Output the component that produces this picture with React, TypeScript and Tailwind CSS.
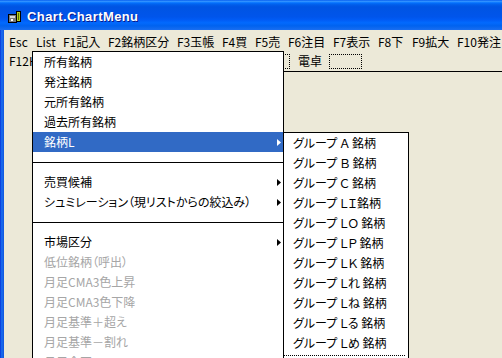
import React from "react";

const barItems = [
  { label: "Esc", w: "w-[27px]" },
  { label: "List", w: "w-[27px]" },
  { label: "F1記入", w: "w-[45px]" },
  { label: "F2銘柄区分", w: "w-[69px]" },
  { label: "F3玉帳", w: "w-[45px]" },
  { label: "F4買", w: "w-[33px]" },
  { label: "F5売", w: "w-[33px]" },
  { label: "F6注目", w: "w-[45px]" },
  { label: "F7表示", w: "w-[45px]" },
  { label: "F8下", w: "w-[34px]" },
  { label: "F9拡大", w: "w-[45px]" },
  { label: "F10発注", w: "w-[60px]" },
];

type Item = {
  label?: string;
  sub?: boolean;
  active?: boolean;
  disabled?: boolean;
  sep?: boolean;
};

const menuItems: Item[] = [
  { label: "所有銘柄" },
  { label: "発注銘柄" },
  { label: "元所有銘柄" },
  { label: "過去所有銘柄" },
  { label: "銘柄L", sub: true, active: true },
  { sep: true },
  { label: "売買候補", sub: true },
  { label: "シュミレーション（現リストからの絞込み）", sub: true },
  { sep: true },
  { label: "市場区分", sub: true },
  { label: "低位銘柄（呼出）", disabled: true },
  { label: "月足CMA3色上昇", disabled: true },
  { label: "月足CMA3色下降", disabled: true },
  { label: "月足基準＋超え", disabled: true },
  { label: "月足基準－割れ", disabled: true },
  { label: "月足今回", disabled: true },
];

const groups = [
  "グループ Ａ 銘柄",
  "グループ Ｂ 銘柄",
  "グループ Ｃ 銘柄",
  "グループ ＬＩ銘柄",
  "グループ ＬＯ 銘柄",
  "グループ ＬＰ 銘柄",
  "グループ ＬＫ 銘柄",
  "グループ Ｌれ 銘柄",
  "グループ Ｌね 銘柄",
  "グループ Ｌる 銘柄",
  "グループ Ｌめ 銘柄",
];

function Arrow({ white }: { white?: boolean }) {
  return (
    <svg width="4" height="7" viewBox="0 0 4 7" className="shrink-0">
      <polygon points="0,0 4,3.5 0,7" fill={white ? "#fff" : "#000"} />
    </svg>
  );
}

function AppIcon() {
  return (
    <svg width="13" height="12" viewBox="0 0 13 12" className="shrink-0">
      <rect x="0.5" y="3.5" width="8" height="8" fill="#7a7a7a" stroke="#000" />
      <rect x="2" y="5" width="5" height="2" fill="#d8d8d8" />
      <rect x="3" y="8" width="2" height="2" fill="#fff" />
      <rect x="8.5" y="0.5" width="4" height="10" fill="#b8d020" stroke="#000" />
      <rect x="10" y="2" width="1" height="7" fill="#5a7000" />
    </svg>
  );
}

export default function App() {
  return (
    <div className="relative w-[502px] h-[358px] overflow-hidden bg-[#ECE9D8] text-[12px] text-black font-['Noto_Sans_CJK_JP',sans-serif] [font-feature-settings:'palt']">
      {/* title bar */}
      <div className="h-[30px] flex items-center gap-[6px] pl-[8px] pt-[3px] bg-[linear-gradient(180deg,#0058EE_0%,#3593FF_4%,#288EFF_6%,#127DFF_8%,#036FFC_10%,#0262EE_14%,#0057E5_20%,#0054E3_24%,#0055EB_56%,#005BF5_66%,#026AFE_76%,#0062EF_86%,#1a6ef0_100%)]">
        <AppIcon />
        <span className="text-white font-bold text-[13px] font-['Liberation_Sans',sans-serif] tracking-[0.4px] [text-shadow:1px_1px_#0a1a8a]">
          Chart.ChartMenu
        </span>
      </div>

      <div className="flex h-[328px]">
        <div className="w-[4px] shrink-0 bg-[linear-gradient(90deg,#0831D9,#166AEE_40%,#1a62e6_75%,#0855DD)]" />
        <div className="flex-1 min-w-0 flex flex-col">
          {/* menu bar */}
          <div className="h-[21px] flex items-center pl-[5px] pt-[2px] whitespace-nowrap">
            {barItems.map((b) => (
              <span key={b.label} className={`${b.w} shrink-0`}>
                {b.label}
              </span>
            ))}
          </div>
          <div className="h-[20px] flex items-center pl-[5px] whitespace-nowrap">
            <span className="w-[200px] shrink-0">F12H</span>
            <div className="w-[81px] h-[15px] shrink-0 border border-dotted border-black" />
            <span className="ml-[8px]">電卓</span>
            <div className="ml-[7px] w-[33px] h-[15px] shrink-0 border border-dotted border-black" />
          </div>
          <div className="flex-1 ml-[230px] border-t border-black" />
        </div>
      </div>

      {/* dropdown */}
      <div className="absolute left-[32px] top-[51px] w-[252px] h-[330px] bg-white border border-black">
        {menuItems.map((it, i) =>
          it.sep ? (
            <div key={i} className="h-[20px] pt-[10px]">
              <div className="h-px bg-black" />
            </div>
          ) : (
            <div
              key={i}
              className={`h-[20px] flex items-center justify-between pl-[11px] pr-[2px] whitespace-nowrap ${
                it.active ? "bg-[#316AC5] text-white" : it.disabled ? "text-[#a6a6a6]" : ""
              }`}
            >
              <span>{it.label}</span>
              {it.sub && <Arrow white={it.active} />}
            </div>
          )
        )}
      </div>

      {/* submenu */}
      <div className="absolute left-[283px] top-[132px] w-[126px] h-[240px] bg-white border border-black">
        {groups.map((g) => (
          <div key={g} className="h-[20px] flex items-center pl-[9px] whitespace-pre">
            {g}
          </div>
        ))}
        <div className="mt-[2px] mr-[3px] border-t border-dotted border-black" />
      </div>
    </div>
  );
}
